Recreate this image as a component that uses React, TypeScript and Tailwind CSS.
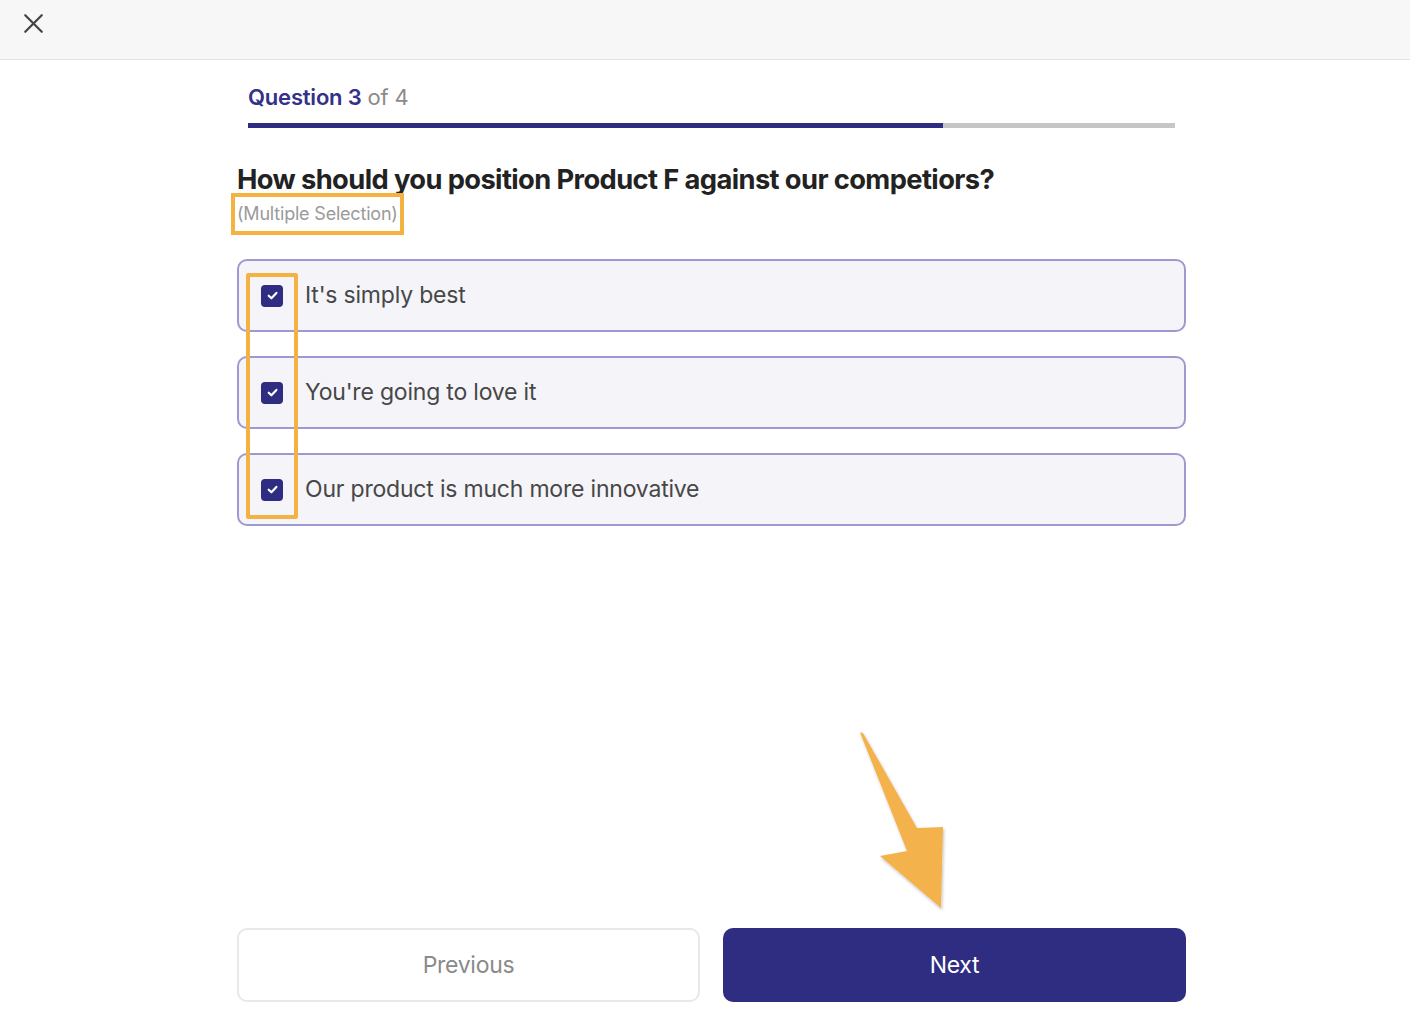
import { X } from 'lucide-react';

const options = [
  "It's simply best",
  "You're going to love it",
  'Our product is much more innovative',
];

function CheckBox() {
  return (
    <span className="flex h-[22px] w-[22px] shrink-0 items-center justify-center rounded-[4px] bg-[#2e2d82]">
      <svg width="13" height="13" viewBox="0 0 12 12" fill="none">
        <path d="M2.5 6.2 L5 8.6 L9.6 3.6" stroke="white" strokeWidth="2" strokeLinecap="round" strokeLinejoin="round" />
      </svg>
    </span>
  );
}

export default function App() {
  return (
    <div className="relative min-h-[1030px] bg-white" style={{ fontFamily: 'Inter, "Noto Sans", sans-serif' }}>
      {/* Top bar */}
      <div className="flex h-[60px] items-start border-b border-[#e2e2e2] bg-[#f7f7f7] pl-[17px] pt-[7px]">
        <X size={33} strokeWidth={1.6} className="text-[#444]" />
      </div>

      <div className="ml-[237px] flex w-[949px] flex-col">
        {/* Progress */}
        <div className="px-[11px] pt-[24px]">
          <div className="text-[22px] leading-[27px] tracking-[-0.2px]">
            <span className="font-semibold text-[#33318a]">Question 3</span>
            <span className="text-[#8a8a8a]"> of 4</span>
          </div>
          <div className="mt-[12px] flex h-[5px] w-[927px] bg-[#c6c6c6]">
            <div className="h-full w-[695px] bg-[#2e2d82]" />
          </div>
        </div>

        {/* Question */}
        <h1 className="mt-[37px] text-[27.3px] font-bold leading-[30px] tracking-[-0.6px] text-[#222]">
          How should you position Product F against our competiors?
        </h1>
        <div className="relative -ml-[6px] -mt-[2px] w-fit border-[4px] border-[#f4b243] px-[2px] py-[7px] text-[18px] leading-[20px] tracking-[-0.2px] text-[#9a9a9a]">
          (Multiple Selection)
        </div>

        {/* Options */}
        <div className="relative mt-[24px] flex flex-col gap-[24px]">
          {options.map((o) => (
            <div
              key={o}
              className="flex h-[73px] items-center gap-[22px] rounded-[10px] border-2 border-[#9d99d1] bg-[#f4f4f9] pl-[22px]"
            >
              <CheckBox />
              <span className="text-[23px] tracking-[-0.2px] text-[#474747]">{o}</span>
            </div>
          ))}
          <div className="pointer-events-none absolute left-[9px] top-[14px] h-[246px] w-[52px] rounded-[2px] border-[4px] border-[#f4b243]" />
        </div>

        {/* Buttons */}
        <div className="mt-[402px] flex gap-[23px]">
          <button className="h-[74px] w-[463px] rounded-[10px] border-2 border-[#e8e8e8] bg-white text-[23px] tracking-[-0.3px] text-[#8a8a8a]">
            Previous
          </button>
          <button className="h-[74px] w-[463px] rounded-[10px] bg-[#2e2d82] text-[23px] tracking-[-0.3px] text-white">
            Next
          </button>
        </div>
      </div>

      {/* Annotation arrow */}
      <svg
        className="pointer-events-none absolute left-[850px] top-[725px]"
        width="110"
        height="200"
        viewBox="0 0 110 200"
      >
        <defs>
          <filter id="sh" x="-20%" y="-20%" width="140%" height="140%">
            <feDropShadow dx="1" dy="2" stdDeviation="1.5" floodColor="#000" floodOpacity="0.25" />
          </filter>
        </defs>
        <path
          d="M11 10 Q9 6 13 8 L67 103 L93 102 L91 183 L30 131 L57 126 Z"
          fill="#f3b24b"
          filter="url(#sh)"
        />
      </svg>
    </div>
  );
}
